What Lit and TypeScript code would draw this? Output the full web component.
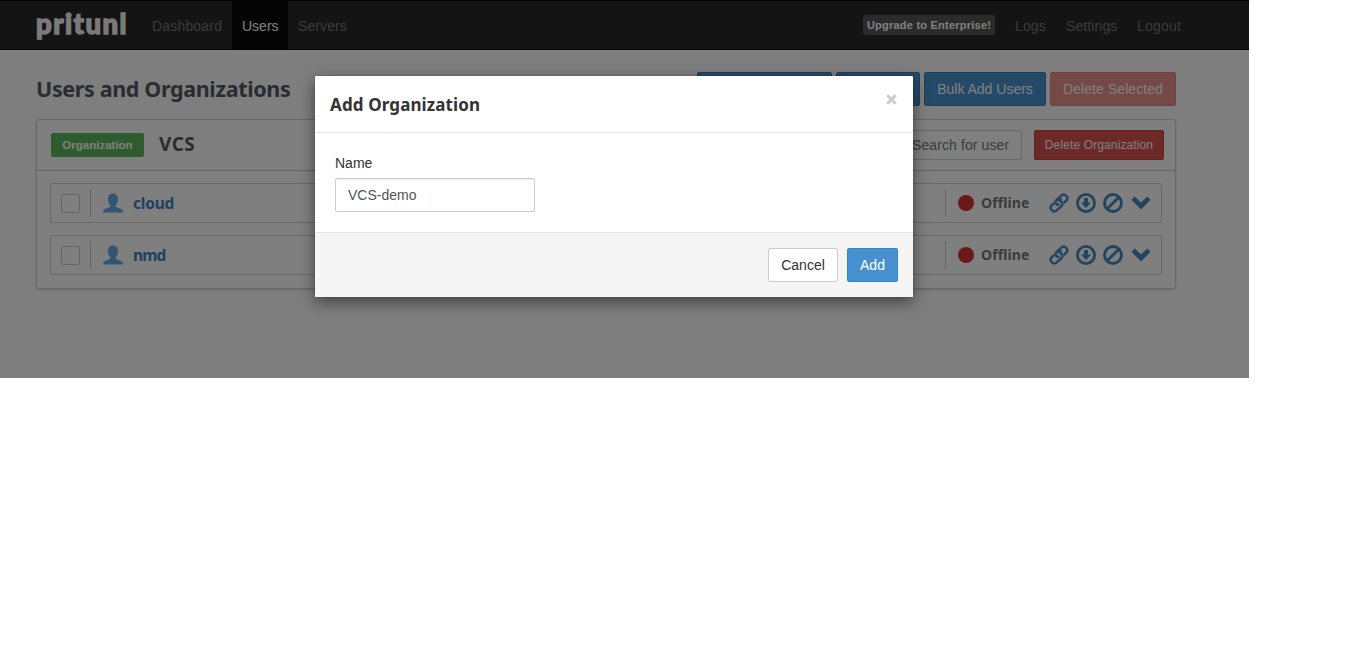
import { LitElement, html, css, svg } from "lit";
import { customElement } from "lit/decorators.js";

const userIcon = svg`<svg class="glyph person" viewBox="0 0 20 20"><path d="M10 .5C13 .5 15 2.600 15 6C15 8.600 14.200 10.500 12.900 11.900C12.500 12.400 12.600 13.600 13.200 14C14.200 14.700 18.300 15.700 19.200 16.700C19.800 17.400 20 18.500 20 19.500H0C0 18.500 .2 17.400 .8 16.700C1.700 15.700 5.800 14.700 6.800 14C7.400 13.600 7.500 12.400 7.100 11.900C5.800 10.500 5 8.600 5 6C5 2.600 7 .5 10 .5Z"/></svg>`;
const linkIcon = svg`<svg class="glyph" viewBox="0 0 20 20" fill="none" stroke="currentColor" stroke-width="2.400"><path d="M14.800 10.200L17.600 7.400Q19.300 5.300 17.600 3.400L16.600 2.400Q14.700 .7 12.600 2.400L7.300 7.200Q5.700 9 7.300 10.900Q8.800 12.400 10.500 11.300"/><path d="M5.200 9.800L2.400 12.600Q.7 14.700 2.400 16.600L3.400 17.600Q5.300 19.300 7.400 17.600L12.700 12.800Q14.300 11 12.700 9.100Q11.200 7.600 10.200 7.300L12.400 5.500"/></svg>`;
const downloadIcon = svg`<svg class="glyph" viewBox="0 0 20 20"><circle cx="10" cy="10" r="8.600" fill="none" stroke="currentColor" stroke-width="2.800"/><path d="M8 5H12V9.500H15L10 15L5 9.500H8Z"/></svg>`;
const banIcon = svg`<svg class="glyph" viewBox="0 0 20 20" fill="none" stroke="currentColor" stroke-width="2.900"><circle cx="10" cy="10" r="8.500"/><path d="M4.200 15.800L15.800 4.200"/></svg>`;
const chevronIcon = svg`<svg class="glyph" viewBox="0 0 20 20"><path d="M3.700 3.500L10 9.500L16.300 3.500L19.600 6.800L10 16.400L.4 6.800Z"/></svg>`;

@customElement("app-root")
export class AppRoot extends LitElement {
  static styles = css`
    :host { display: block; font: 14px/20px "Liberation Sans", Arial, sans-serif; color: #333; }
    * { box-sizing: border-box; }
    .page { position: relative; width: 1249px; height: 378px; overflow: hidden; background: #fcfcfc; }
    .nav { display: flex; height: 50px; background: #282828; border: solid #040404; border-width: 1px 0; padding: 0 57px 0 36px; }
    .logo { width: 106px; font: 900 27.500px/46px Lato, sans-serif; letter-spacing: 1.450px; color: #f4f4f4; -webkit-text-stroke: 1.300px #f4f4f4; white-space: nowrap; }
    .item { padding: 15px 10px 13px; color: #777; letter-spacing: .1px; white-space: nowrap; }
    .item.dash { width: 90px; letter-spacing: .18px; }
    .item.active { width: 56px; background: #080808; color: #fff; letter-spacing: 0; }
    .item.logs { width: 51px; }
    .item.settings { width: 71px; }
    .item.logout { width: 65px; letter-spacing: .2px; }
    .spacer { flex: 1; }
    .badge { align-self: flex-start; margin: 14px 10px 0 0; width: 132px; height: 20px; border-radius: 3px; background: #575757; color: #fff; font: bold 11px/20px "Liberation Sans", Arial, sans-serif; letter-spacing: .23px; text-align: center; white-space: nowrap; }
    .heading { display: flex; gap: 4px; padding: 22px 73px 0 36px; height: 69px; }
    .title { flex: 1; margin: 0; font: bold 21.500px/34px "Noto Sans", sans-serif; letter-spacing: -.36px; color: #535a64; white-space: nowrap; }
    .btn { height: 34px; padding: 0 12px; border: 1px solid #3e7eb2; border-radius: 2px; background: #4a94d2; color: #fff; font: 14px/32px "Liberation Sans", Arial, sans-serif; white-space: nowrap; text-align: center; }
    .btn.wide { width: 135px; }
    .btn.mid { width: 84px; }
    .btn.bulk { width: 122px; }
    .btn.faded { width: 126px; background: #ea9290; border-color: #df8381; letter-spacing: .07px; }
    .panel { margin: 0 73px 0 36px; height: 170px; border: 1px solid #d2d2d2; border-radius: 3px; background: #fff; box-shadow: 0 1px 2px rgba(0,0,0,.15); }
    .org { display: flex; height: 51px; padding: 10px 11px 0 14px; border-bottom: 1px solid #c9c9c9; }
    .tag { margin: 3px 15px 0 0; width: 93px; height: 24px; border-radius: 2px; background: #5cb85c; color: #fff; font: bold 11.500px/24px "Liberation Sans", Arial, sans-serif; text-align: center; }
    .orgname { flex: 1; font: bold 19px/28px "Noto Sans", sans-serif; letter-spacing: .5px; color: #535a64; }
    .search { width: 123px; height: 30px; margin-right: 12px; padding: 0 12px; border: 1px solid #ccc; border-radius: 2px; background: #fff; color: #777; line-height: 28px; letter-spacing: .1px; white-space: nowrap; }
    .clip { overflow: hidden; }
    .danger { width: 130px; height: 30px; border: 1px solid #d43f3a; border-radius: 2px; background: #d9534f; color: #fff; font-size: 12px; line-height: 28px; letter-spacing: .12px; text-align: center; white-space: nowrap; }
    .rows { display: flex; flex-direction: column; gap: 12px; padding: 12px 13px; }
    .row { display: flex; align-items: center; height: 40px; border: 1px solid #cfcfcf; border-radius: 2px; padding: 0 10px; }
    .check { width: 19px; height: 19px; border: 1px solid #c8c8c8; border-radius: 2px; }
    .bar { width: 1px; height: 28px; background: #c8c8c8; margin: 0 12px 0 10px; }
    .glyph { display: block; width: 20px; height: 20px; fill: currentColor; color: #4789bf; }
    .glyph[fill="none"] { fill: none; }
    .person { color: #64abe7; }
    .name { flex: 1; padding-left: 10px; font: bold 15.500px/20px "Noto Sans", sans-serif; letter-spacing: -.2px; color: #3f84bc; }
    .name.tight { letter-spacing: -.8px; }
    .dot { width: 16px; height: 16px; border-radius: 50%; background: #d33232; }
    .status { width: 68px; margin: 0 0 0 7px; font: bold 14px/20px "Noto Sans", sans-serif; letter-spacing: .1px; color: #777; white-space: nowrap; }
    .icons { display: flex; gap: 7px; }
    .icons .glyph:last-child { margin-left: 1px; }
    .backdrop { position: absolute; inset: 0; background: rgba(0,0,0,.5); }
    .modal { position: absolute; left: 315px; top: 76px; width: 598px; height: 221px; background: #fff; border-radius: 1px; box-shadow: 0 5px 15px rgba(0,0,0,.5), 0 0 1px rgba(0,0,0,.4); display: flex; flex-direction: column; }
    .mhead { display: flex; justify-content: space-between; height: 57px; padding: 15px; border-bottom: 1px solid #e5e5e5; }
    .mtitle { font: bold 17px/27px "Noto Sans", sans-serif; letter-spacing: .12px; color: #333; white-space: nowrap; }
    .close { width: 11px; height: 11px; margin: 3px 1px 0 0; }
    .mbody { flex: 1; padding: 20px; }
    .label { display: block; margin-bottom: 5px; }
    .field { width: 200px; height: 34px; padding: 0 12px; border: 1px solid #ccc; border-radius: 2px; color: #555; line-height: 32px; box-shadow: inset 0 1px 1px rgba(0,0,0,.075); }
    .mfoot { display: flex; justify-content: flex-end; gap: 9px; height: 65px; padding: 15px; border-top: 1px solid #e5e5e5; background: #f5f5f5; }
    .cancel { width: 70px; background: #fff; border-color: #ccc; color: #333; }
    .add { width: 51px; background: #4790d0; border-color: #3a84c5; }
  `;

  private row(name: string, tight = false) {
    return html`<div class="row">
      <span class="check"></span><span class="bar"></span>${userIcon}
      <span class="name ${tight ? "tight" : ""}">${name}</span>
      <span class="bar"></span><span class="dot"></span><span class="status">Offline</span>
      <span class="icons">${linkIcon}${downloadIcon}${banIcon}${chevronIcon}</span>
    </div>`;
  }

  render() {
    return html`<div class="page">
      <nav class="nav">
        <span class="logo">pritunl</span>
        <span class="item dash">Dashboard</span><span class="item active">Users</span><span class="item">Servers</span>
        <span class="spacer"></span>
        <span class="badge">Upgrade to Enterprise!</span>
        <span class="item logs">Logs</span><span class="item settings">Settings</span><span class="item logout">Logout</span>
      </nav>
      <div class="heading">
        <h1 class="title">Users and Organizations</h1>
        <span class="btn wide">Add Organization</span><span class="btn mid">Add User</span>
        <span class="btn bulk">Bulk Add Users</span><span class="btn faded">Delete Selected</span>
      </div>
      <section class="panel">
        <div class="org">
          <span class="tag">Organization</span><span class="orgname">VCS</span>
          <div class="search"><div class="clip">Search for user</div></div>
          <span class="danger">Delete Organization</span>
        </div>
        <div class="rows">${this.row("cloud")}${this.row("nmd", true)}</div>
      </section>
      <div class="backdrop"></div>
      <div class="modal">
        <div class="mhead">
          <span class="mtitle">Add Organization</span>
          <svg class="close" viewBox="0 0 11 11"><path d="M1.300 1.300L9.700 9.700M9.700 1.300L1.300 9.700" stroke="#ccc" stroke-width="3"/></svg>
        </div>
        <div class="mbody"><span class="label">Name</span><div class="field">VCS-demo</div></div>
        <div class="mfoot"><span class="btn cancel">Cancel</span><span class="btn add">Add</span></div>
      </div>
    </div>`;
  }
}
